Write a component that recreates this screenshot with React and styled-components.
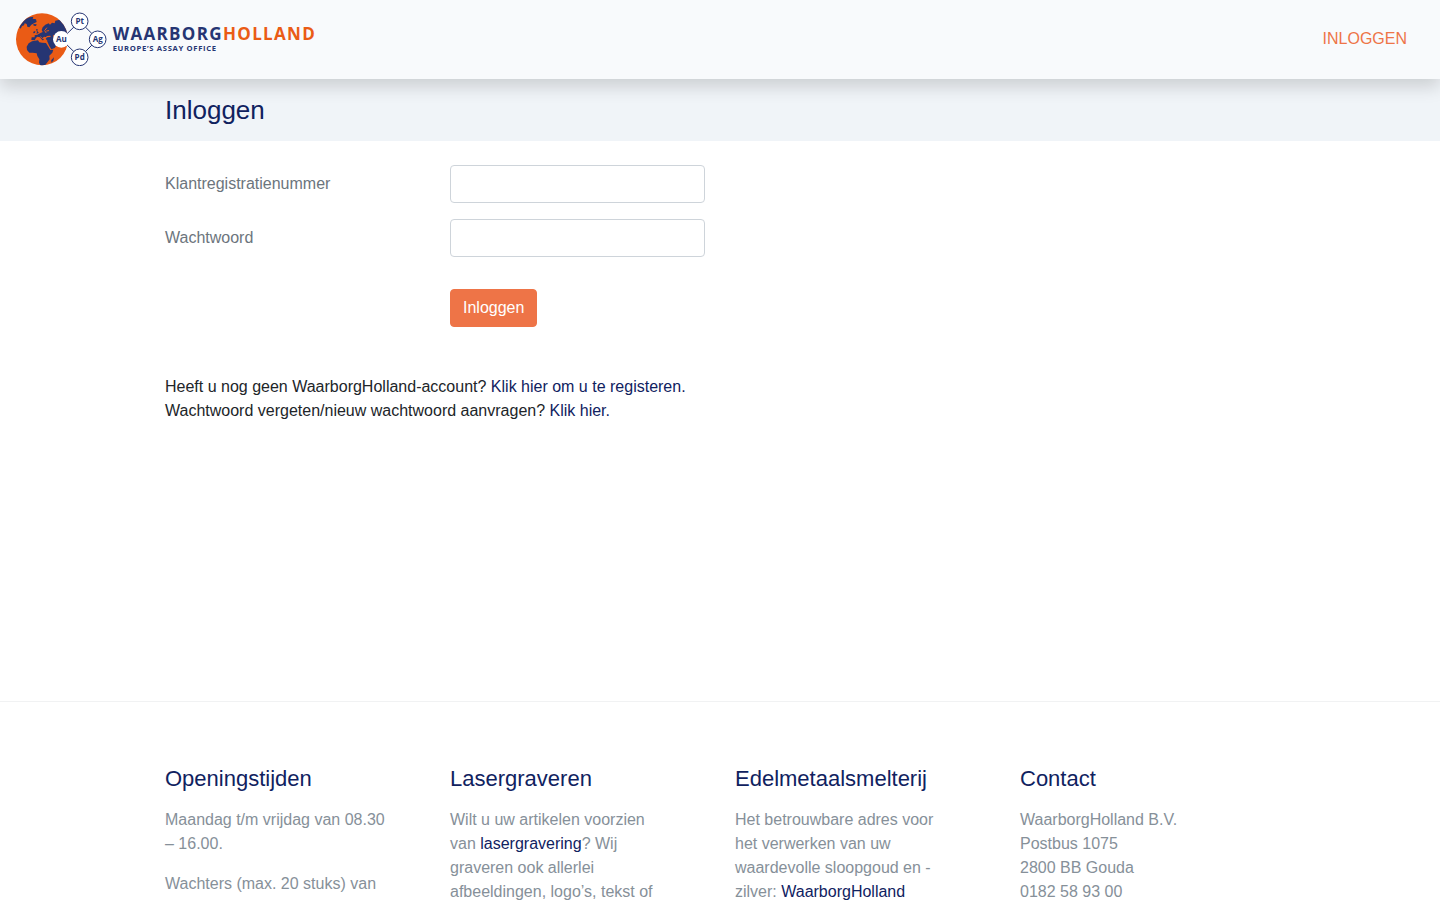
import React from "react";
import styled, { createGlobalStyle } from "styled-components";

const navy = "#10225f";
const orange = "#ee7447";
const logoNavy = "#263573";
const logoOrange = "#ea5b15";

const GlobalStyle = createGlobalStyle`
  *, *::before, *::after { box-sizing: border-box; }
  body {
    margin: 0;
    background: #fff;
    color: #212529;
    font: 16px/24px "Liberation Sans", Arial, sans-serif;
  }
`;

const Header = styled.header`
  position: relative;
  z-index: 1;
  display: flex;
  align-items: center;
  justify-content: space-between;
  padding: 12px 16px 13px;
  background: #f8fafc;
  box-shadow: 0 8px 16px rgba(0, 0, 0, 0.15);
`;

const Brand = styled.a`
  display: block;
  svg { display: block; }
`;

const NavLink = styled.a`
  padding: 8px 17px;
  color: ${orange};
  text-decoration: none;
  text-transform: uppercase;
`;

const Container = styled.div`
  max-width: 1140px;
  margin: 0 auto;
  padding: 0 15px;
`;

const TitleBand = styled.div`
  padding: 16px 0 15px;
  background: #f0f4f8;
`;

const Title = styled.h1`
  margin: 0;
  color: ${navy};
  font-size: 26px;
  line-height: 31px;
  font-weight: 400;
`;

const Main = styled.main`
  min-height: 560px;
  padding: 24px 0;
`;

const Form = styled.form`
  display: grid;
  gap: 16px;
`;

const Row = styled.div`
  display: grid;
  grid-template-columns: repeat(4, 1fr);
  column-gap: 30px;
  align-items: center;
`;

const Label = styled.label`
  color: #6c757d;
`;

const Input = styled.input`
  width: 100%;
  height: 38px;
  padding: 6px 12px;
  border: 1px solid #ced4da;
  border-radius: 4px;
  background: #fff;
  color: #495057;
  font: inherit;
`;

const ButtonRow = styled(Row)`
  padding-top: 16px;
`;

const Button = styled.button`
  grid-column: 2;
  justify-self: start;
  height: 38px;
  padding: 6px 12px;
  border: 1px solid ${orange};
  border-radius: 4px;
  background: ${orange};
  color: #fff;
  font: inherit;
`;

const Help = styled.p`
  margin: 48px 0 0;
`;

const Link = styled.a`
  color: ${navy};
  text-decoration: none;
`;

const Footer = styled.footer`
  padding-top: 64px;
  border-top: 1px solid #f1f2f3;
  color: #869099;
`;

const Columns = styled.div`
  display: grid;
  grid-template-columns: repeat(4, 1fr);
  column-gap: 30px;
`;

const Column = styled.section`
  padding-right: 33px;
`;

const ColumnTitle = styled.h2`
  margin: 0 0 16px;
  color: ${navy};
  font-size: 22px;
  line-height: 26px;
  font-weight: 400;
`;

const Text = styled.p`
  margin: 0 0 16px;
  &:last-child { margin-bottom: 0; }
`;

const Address = styled.address`
  font-style: normal;
`;

const LogoText = styled.text`
  font-family: "Open Sans", "Noto Sans", sans-serif;
  font-weight: 700;
  fill: ${logoNavy};
`;

const AtomName = styled(LogoText)`
  font-size: 24px;
  text-anchor: middle;
`;

const Wordmark = styled(LogoText)`
  font-size: 51px;
  letter-spacing: 4px;
`;

const Tagline = styled(LogoText)`
  font-size: 23px;
  letter-spacing: 2px;
`;

const atoms = [
  { name: "Au", x: 142, y: 88, stroke: "none" },
  { name: "Pt", x: 197, y: 34, stroke: logoNavy },
  { name: "Ag", x: 251, y: 88, stroke: logoNavy },
  { name: "Pd", x: 197, y: 142, stroke: logoNavy },
];

function Logo() {
  return (
    <svg width="302" height="54" viewBox="6 6 906 162" role="img" aria-label="WaarborgHolland">
      <defs>
        <clipPath id="globe"><circle cx="84" cy="88" r="78" /></clipPath>
      </defs>
      <circle cx="84" cy="88" r="78" fill={logoOrange} />
      <g clipPath="url(#globe)" fill={logoNavy}>
        {/* Greenland and the Canadian islands */}
        <path d="M16 52 24 38 34 28 46 22 58 20 56 26 66 28 68 36 60 40 52 44 46 52 40 50 38 42 32 40 30 46 24 48 20 56Z" />
        <path d="M58 42 68 43 66 48 59 47Z" />
        {/* British Isles */}
        <path d="M66 58 71 57 70 63 75 69 67 71 69 66ZM58 65 64 63 63 69 58 70Z" />
        {/* Europe and Asia */}
        <path d="M86 66 83 60 86 52 94 44 104 40 108 44 114 38 122 40 124 32 134 30 138 20 170 50 170 96 130 104 118 100 112 92 100 92 95 86 100 82 90 80 86 84 90 90 85 91 78 82 70 80 66 84 62 91 52 90 53 82 62 82 62 76 70 74 78 70Z" />
        {/* Arabia */}
        <path d="M99 92 112 90 128 106 122 114 112 118 106 108Z" />
        {/* Africa */}
        <path d="M38 110 44 100 54 94 72 91 76 97 84 98 96 99 104 112 109 120 118 119 115 128 106 137 107 148 99 158 92 167 80 168 75 158 76 148 70 138 68 130 56 128 46 128 39 120Z" />
        <path d="M112 150 120 142 118 152 112 158Z" />
      </g>
      <g fill="none" stroke={logoOrange} strokeLinecap="round" strokeLinejoin="round">
        {/* Baltic, Adriatic, Black Sea and Caspian */}
        <path d="M96 68 92 62 98 54M98 63 104 62" strokeWidth="3" />
        <path d="M80 80 86 86" strokeWidth="2" />
        <path d="M99 80 108 79" strokeWidth="4" />
        <path d="M119 76 121 84" strokeWidth="3" />
      </g>
      <path d="M142 88 197 34 251 88 197 142Z" fill="none" stroke={logoNavy} strokeWidth="3" />
      {atoms.map((a) => (
        <g key={a.name}>
          <circle cx={a.x} cy={a.y} r="25" fill="#fff" stroke={a.stroke} strokeWidth="3" />
          <AtomName x={a.x} y={a.y + 8}>{a.name}</AtomName>
        </g>
      ))}
      <Wordmark x="296" y="90">
        WAARBORG<tspan fill={logoOrange}>HOLLAND</tspan>
      </Wordmark>
      <Tagline x="296" y="123">EUROPE’S ASSAY OFFICE</Tagline>
    </svg>
  );
}

export default function App() {
  return (
    <>
      <GlobalStyle />
      <Header>
        <Brand href="#"><Logo /></Brand>
        <nav><NavLink href="#">Inloggen</NavLink></nav>
      </Header>
      <TitleBand>
        <Container><Title>Inloggen</Title></Container>
      </TitleBand>
      <Main>
        <Container>
          <Form>
            <Row>
              <Label htmlFor="customer">Klantregistratienummer</Label>
              <Input id="customer" type="text" />
            </Row>
            <Row>
              <Label htmlFor="password">Wachtwoord</Label>
              <Input id="password" type="password" />
            </Row>
            <ButtonRow><Button type="submit">Inloggen</Button></ButtonRow>
          </Form>
          <Help>
            Heeft u nog geen WaarborgHolland-account? <Link href="#">Klik hier om u te registeren.</Link>
            <br />
            Wachtwoord vergeten/nieuw wachtwoord aanvragen? <Link href="#">Klik hier.</Link>
          </Help>
        </Container>
      </Main>
      <Footer>
        <Container>
          <Columns>
            <Column>
              <ColumnTitle>Openingstijden</ColumnTitle>
              <Text>Maandag t/m vrijdag van 08.30 – 16.00.</Text>
              <Text>Wachters (max. 20 stuks) van</Text>
            </Column>
            <Column>
              <ColumnTitle>Lasergraveren</ColumnTitle>
              <Text>
                Wilt u uw artikelen voorzien van <Link href="#">lasergravering</Link>? Wij graveren
                ook allerlei afbeeldingen, logo’s, tekst of
              </Text>
            </Column>
            <Column>
              <ColumnTitle>Edelmetaalsmelterij</ColumnTitle>
              <Text>
                Het betrouwbare adres voor het verwerken van uw waardevolle sloopgoud en -zilver:{" "}
                <Link href="#">WaarborgHolland</Link>
              </Text>
            </Column>
            <Column>
              <ColumnTitle>Contact</ColumnTitle>
              <Address>
                WaarborgHolland B.V.<br />
                Postbus 1075<br />
                2800 BB Gouda<br />
                0182 58 93 00
              </Address>
            </Column>
          </Columns>
        </Container>
      </Footer>
    </>
  );
}
